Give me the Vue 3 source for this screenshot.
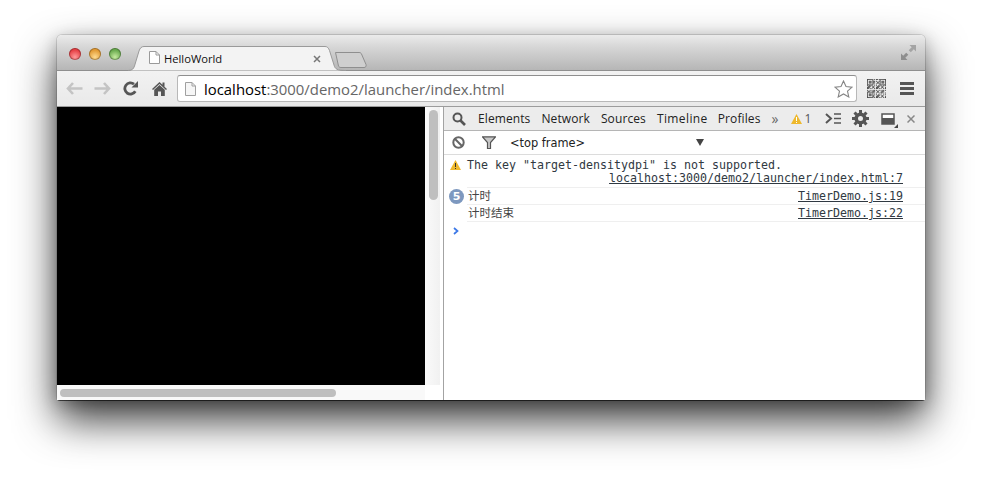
<script setup>
const tabs = ['Elements', 'Network', 'Sources', 'Timeline', 'Profiles']
const size = 21
const finder = (x, y) => {
  const ring = (a, b) => {
    const dx = x - a
    const dy = y - b
    if (dx < 0 || dy < 0 || dx > 6 || dy > 6) return null
    return dx === 0 || dy === 0 || dx === 6 || dy === 6 || (dx > 1 && dx < 5 && dy > 1 && dy < 5)
  }
  for (const [a, b] of [[0, 0], [14, 0], [0, 14]]) {
    const r = ring(a, b)
    if (r !== null) return r
  }
  return null
}
const cells = []
for (let y = 0; y < size; y++) {
  for (let x = 0; x < size; x++) {
    const f = finder(x, y)
    const on = f === null ? ((x * 7 + y * 13 + x * y * 3) % 5) < 2 + ((x ^ y) & 1) : f
    if (on) cells.push({ x, y, k: x + '-' + y })
  }
}
</script>

<template>
  <div class="page">
    <div class="window">
      <div class="titlebar">
        <div class="lights">
          <span class="light red"></span>
          <span class="light amber"></span>
          <span class="light green"></span>
        </div>
        <div class="tab">
          <svg class="tabshape" width="218" height="25" viewBox="0 0 218 25">
            <path d="M0 24.500C4 24.500 5.500 23 6.500 20L11 5C12 2 13.500 .5 16 .5H197C199.500 .5 200.500 2 201.500 4.500L206 19C207 23 209 24.500 218 24.500" fill="#f3f3f3" stroke="#9a9a9a"/>
          </svg>
          <svg class="pageicon" width="11" height="13" viewBox="0 0 11 13"><path d="M.5.5H7L10.500 4V12.500H.5Z" fill="#fff" stroke="#9a9a9a"/><path d="M7 .5V4H10.500" fill="none" stroke="#9a9a9a"/></svg>
          <span class="tabtitle">HelloWorld</span>
          <svg class="tabclose" width="8" height="8" viewBox="0 0 8 8"><path d="M1 1L7 7M7 1L1 7" stroke="#777" stroke-width="1.500"/></svg>
        </div>
        <svg class="newtab" width="32" height="16" viewBox="0 0 32 16"><path d="M.5.5H24C25.500.5 26 1 26.500 2L31 12.500C31.500 14.500 30.500 15.500 29 15.500H6C4.500 15.500 4 15 3.500 14L.5.5Z" fill="#cfcfcf" stroke="#8f8f8f"/></svg>
        <svg class="fullscreen" width="15" height="15" viewBox="0 0 15 15"><path d="M8.500 0H15V6.500L12.800 4.300L9.800 7.300L7.700 5.200L10.700 2.200Z" fill="#a4a4a4"/><path d="M0 8.500V15H6.500L4.300 12.800L7.300 9.800L5.200 7.700L2.200 10.700Z" fill="#8e8e8e"/></svg>
      </div>

      <div class="toolbar">
        <svg width="17" height="13" viewBox="0 0 17 13"><path d="M7 1L2 6.500L7 12M2.500 6.500H16.500" fill="none" stroke="#c4c4c4" stroke-width="2.600"/></svg>
        <svg width="17" height="13" viewBox="0 0 17 13"><path d="M10 1L15 6.500L10 12M14.500 6.500H.5" fill="none" stroke="#c4c4c4" stroke-width="2.600"/></svg>
        <svg class="reload" width="15" height="15" viewBox="0 0 15 15"><path d="M12.300 10.300A5.600 5.600 0 1 1 11 3.200" fill="none" stroke="#555" stroke-width="2.800"/><path d="M8.500 6.500H15V0Z" fill="#555"/></svg>
        <svg class="home" width="15" height="14" viewBox="0 0 15 14"><path d="M0 7L7.500 0L10.500 2.800V.5H12.500V4.700L15 7L14 8L7.500 2L1 8Z" fill="#555"/><path d="M2.200 7.800L7.500 3L12.800 7.800V14H9V9.500H6V14H2.200Z" fill="#555"/></svg>
        <div class="omnibox">
          <svg width="11" height="14" viewBox="0 0 11 14"><path d="M.5.5H7L10.500 4V13.500H.5Z" fill="#f6f6f6" stroke="#a0a0a0"/><path d="M7 .5V4H10.500" fill="none" stroke="#a0a0a0"/></svg>
          <span class="url"><b>localhost</b>:3000/demo2/launcher/index.html</span>
          <svg class="star" width="19" height="18" viewBox="0 0 19 18"><path d="M9.500 1L12 6.500L18 7.200L13.500 11.200L14.800 17L9.500 14L4.200 17L5.500 11.200L1 7.200L7 6.500Z" fill="#fff" stroke="#858585" stroke-width="1.100"/></svg>
        </div>
        <svg class="qr" width="19" height="19" viewBox="0 0 21 21"><rect v-for="c in cells" :key="c.k" :x="c.x" :y="c.y" width="1" height="1" fill="#333"/></svg>
        <svg class="menu" width="14" height="13" viewBox="0 0 14 13"><path d="M0 0H14V3H0ZM0 5H14V8H0ZM0 10H14V13H0Z" fill="#555"/></svg>
      </div>

      <div class="content">
        <div class="viewport">
          <div class="stage">
            <div class="black"></div>
            <div class="vtrack"><span class="vthumb"></span></div>
          </div>
          <div class="htrack"><span class="hthumb"></span></div>
        </div>

        <div class="devtools">
          <div class="dtbar">
            <svg class="search" width="14" height="14" viewBox="0 0 14 14"><circle cx="5.500" cy="5.500" r="4" fill="none" stroke="#555" stroke-width="2"/><path d="M8.500 8.500L13 13" stroke="#555" stroke-width="2.600"/></svg>
            <nav class="dttabs"><span v-for="t in tabs" :key="t">{{ t }}</span></nav>
            <span class="more">»</span>
            <svg class="warn" width="11" height="10" viewBox="0 0 11 10"><path d="M5.500 0L11 10H0Z" fill="#eeb82c"/><path d="M5 3H6V7H5ZM5 8H6V9H5Z" fill="#fff"/></svg>
            <span class="count">1</span>
            <svg class="drawer" width="16" height="11" viewBox="0 0 16 11"><path d="M1 1L6 5.500L1 10" fill="none" stroke="#555" stroke-width="2"/><path d="M9 1H16M9 5.500H16M9 10H16" stroke="#555" stroke-width="1.600"/></svg>
            <svg class="gear" width="17" height="17" viewBox="0 0 17 17"><circle cx="8.500" cy="8.500" r="4.300" fill="none" stroke="#555" stroke-width="3.600"/><path d="M8.500 0V17M0 8.500H17M2.500 2.500L14.500 14.500M14.500 2.500L2.500 14.500" stroke="#555" stroke-width="3" stroke-dasharray="3 11"/></svg>
            <span class="dock">
              <svg width="17" height="15" viewBox="0 0 17 15"><rect x="1" y="1" width="12" height="10" fill="#fff" stroke="#555" stroke-width="1.500"/><rect x="1" y="5" width="12" height="6" fill="#555"/><path d="M17 11V15H13Z" fill="#444"/></svg>
            </span>
            <svg class="dtclose" width="8" height="8" viewBox="0 0 8 8"><path d="M.5.5L7.500 7.500M7.500.5L.5 7.500" stroke="#888" stroke-width="1.500"/></svg>
          </div>

          <div class="filterbar">
            <svg class="block" width="13" height="13" viewBox="0 0 13 13"><circle cx="6.500" cy="6.500" r="5.200" fill="none" stroke="#666" stroke-width="2"/><path d="M2.800 2.800L10.200 10.200" stroke="#666" stroke-width="2"/></svg>
            <svg class="funnel" width="14" height="13" viewBox="0 0 14 13"><path d="M.5.8H13.500L8.500 6.500V12.500H5.500V6.500Z" fill="#c8c8c8" stroke="#555" stroke-width="1.200"/></svg>
            <span class="frame">&lt;top frame&gt;</span>
            <span class="caret"></span>
          </div>

          <div class="console">
            <div class="msg warnmsg">
              <svg class="msgicon" width="11" height="10" viewBox="0 0 11 10"><path d="M5.500 0L11 10H0Z" fill="#eeb82c"/><path d="M5 3H6V7H5ZM5 8H6V9H5Z" fill="#333"/></svg>
              <div class="msgbody">
                <div>The key "target-densitydpi" is not supported.</div>
                <div class="right"><a>localhost:3000/demo2/launcher/index.html:7</a></div>
              </div>
            </div>
            <div class="msg row">
              <span class="badge">5</span>
              <span class="msgtext">计时</span>
              <a>TimerDemo.js:19</a>
            </div>
            <div class="msg row">
              <span class="nobadge"></span>
              <span class="msgtext">计时结束</span>
              <a>TimerDemo.js:22</a>
            </div>
            <svg class="prompt" width="6" height="8" viewBox="0 0 6 8"><path d="M1 1L4.500 4L1 7" fill="none" stroke="#3b78e7" stroke-width="1.700"/></svg>
          </div>
        </div>
      </div>
    </div>
  </div>
</template>

<style scoped>
.page {
  width: 982px;
  height: 479px;
  box-sizing: border-box;
  padding: 35px 57px 79px;
  overflow: hidden;
  background: #fff;
}
.window {
  height: 365px;
  display: flex;
  flex-direction: column;
  border-radius: 5px 5px 3px 3px;
  background: #fff;
  box-shadow: 0 1px 0 rgba(0, 0, 0, .55), 0 0 0 1px rgba(0, 0, 0, .12), 0 20px 42px rgba(0, 0, 0, .78), 0 4px 16px rgba(0, 0, 0, .22);
}
.titlebar {
  height: 36px;
  flex: none;
  display: flex;
  align-items: flex-end;
  position: relative;
  border-radius: 5px 5px 0 0;
  background: linear-gradient(#ebebeb, #d6d6d6 35%, #b6b6b6);
  border-bottom: 1px solid #8f8f8f;
  box-sizing: border-box;
}
.lights {
  display: flex;
  gap: 8px;
  align-self: flex-start;
  padding: 13px 0 0 12px;
}
.light {
  width: 12px;
  height: 12px;
  border-radius: 50%;
  box-shadow: inset 0 0 0 1px rgba(0, 0, 0, .28);
}
.red { background: radial-gradient(circle at 50% 75%, #ff9a9a, #e53f44 65%); }
.amber { background: radial-gradient(circle at 50% 75%, #ffdb90, #e29a33 65%); }
.green { background: radial-gradient(circle at 50% 75%, #c6eba0, #68a94d 65%); }
.tab {
  position: absolute;
  left: 71px;
  top: 11px;
  width: 218px;
  height: 25px;
  font: 11px "Open Sans", sans-serif;
  color: #111;
}
.tabshape { position: absolute; left: 0; top: 0; }
.pageicon { position: absolute; left: 21px; top: 5px; }
.tabtitle { position: absolute; left: 36px; top: 5px; font-size: 11.200px; line-height: 16px; }
.tabclose { position: absolute; left: 185px; top: 9px; }
.newtab { position: absolute; left: 278px; top: 17px; }
.fullscreen { position: absolute; right: 9px; top: 10px; }
.toolbar {
  height: 36px;
  flex: none;
  box-sizing: border-box;
  display: flex;
  align-items: center;
  background: linear-gradient(#f2f2f2, #e9e9e9);
  border-bottom: 1px solid #9c9c9c;
  padding: 0 0 0 9px;
  gap: 11px;
}
.reload { margin-left: 1px; }
.home { margin-left: 3px; margin-right: -1px; }
.omnibox {
  width: 680px;
  height: 27px;
  flex: none;
  box-sizing: border-box;
  display: flex;
  align-items: center;
  gap: 8px;
  padding: 0 1px 0 7px;
  background: #fff;
  border: 1px solid #b8b8b8;
  border-top-color: #8f8f8f;
  border-radius: 3px;
}
.url {
  flex: 1;
  font: 14.900px "Open Sans", sans-serif;
  color: #666;
}
.url b { font-weight: 400; color: #000; }
.star { margin-right: 2px; }
.qr { margin-left: -1px; }
.menu { margin-left: 3px; }
.content {
  flex: 1;
  min-height: 0;
  display: flex;
  background: #fff;
}
.viewport {
  width: 386px;
  display: flex;
  flex-direction: column;
  flex: none;
  border-radius: 0 0 0 3px;
  overflow: hidden;
}
.stage { flex: 1; display: flex; min-height: 0; }
.black { flex: 1; background: #000; }
.vtrack {
  width: 15px;
  margin-right: 3px;
  flex: none;
  box-sizing: border-box;
  padding: 3px 2px 0 4px;
  background: linear-gradient(90deg, #fafafa, #f1f1f1);
}
.vthumb {
  display: block;
  width: 9px;
  height: 90px;
  border-radius: 5px;
  background: #bfbfbf;
}
.htrack {
  height: 15px;
  flex: none;
  box-sizing: border-box;
  padding: 4px 0 0 3px;
  background: linear-gradient(90deg, #f9f9f9 368px, #fff 368px);
}
.hthumb {
  display: block;
  width: 276px;
  height: 8px;
  border-radius: 4px;
  background: #bfbfbf;
}
.devtools {
  flex: 1;
  min-width: 0;
  border-left: 1px solid #a3a3a3;
  display: flex;
  flex-direction: column;
}
.dtbar {
  height: 24px;
  flex: none;
  box-sizing: border-box;
  display: flex;
  align-items: center;
  background: #ececec;
  border-bottom: 1px solid #b5b5b5;
  padding-left: 8px;
  font: 12px "Open Sans", sans-serif;
  color: #222;
}
.dttabs { display: flex; gap: 11px; margin-left: 12px; letter-spacing: .1px; }
.dttabs span:nth-child(4) { letter-spacing: .4px; }
.dttabs span:nth-child(5) { margin-left: -1px; }
.more { margin-left: 11px; color: #666; font-size: 14px; line-height: 14px; }
.warn { margin-left: 13px; }
.count { margin-left: 2px; color: #555; }
.drawer { margin-left: 14px; }
.gear { margin-left: 11px; }
.dock { margin-left: 12px; display: flex; padding-top: 3px; }
.dtclose { margin-left: 9px; }
.filterbar {
  height: 24px;
  flex: none;
  box-sizing: border-box;
  display: flex;
  align-items: center;
  border-bottom: 1px solid #dcdcdc;
  padding-left: 8px;
  font: 11.400px "DejaVu Sans", sans-serif;
  color: #222;
}
.funnel { margin-left: 17px; }
.frame { margin-left: 14px; width: 186px; }
.caret {
  width: 0;
  height: 0;
  border-left: 4px solid transparent;
  border-right: 4px solid transparent;
  border-top: 7px solid #444;
}
.console {
  flex: 1;
  font: 11.630px/13px "DejaVu Sans Mono", "Noto Sans CJK SC", monospace;
  color: #303942;
}
.msg {
  display: flex;
  margin-left: 6px;
  padding-right: 22px;
  box-sizing: border-box;
}
.warnmsg { height: 33px; padding-top: 4px; }
.msgicon { margin-top: 1px; flex: none; }
.msgbody { flex: 1; margin-left: 6px; }
.right { text-align: right; }
a { text-decoration: underline; color: #303942; }
.row {
  height: 17px;
  align-items: center;
  position: relative;
}
.row::before, .row::after {
  content: "";
  position: absolute;
  left: 17px;
  right: 0;
  bottom: 0;
  border-bottom: 1px solid #efefef;
}
.row::after { bottom: auto; top: -1px; }
.badge {
  width: 15px;
  height: 15px;
  margin-left: -1px;
  flex: none;
  border-radius: 50%;
  background: #7d98bf;
  color: #fff;
  text-align: center;
  font: 700 11px/15px "DejaVu Sans", sans-serif;
}
.nobadge { width: 14px; flex: none; }
.msgtext { flex: 1; margin-left: 4px; color: #444; font-size: 11.500px; }
.prompt { display: block; margin: 5px 0 0 9px; }
</style>

<style>
html, body { margin: 0; background: #fff; overflow: hidden; }
</style>
